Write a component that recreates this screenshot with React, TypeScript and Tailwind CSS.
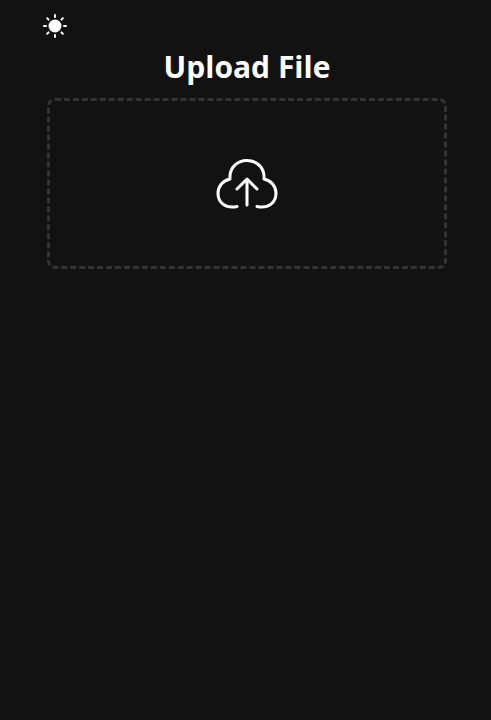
export default function App() {
  return (
    <main className="flex min-h-screen flex-col bg-[#121212] pl-[47px] pr-[44px] font-['Open_Sans','Noto_Sans',sans-serif] text-white">
      <header className="-ml-1 flex h-[50px] items-start pt-[14px]">
        <button aria-label="Toggle theme" className="size-6">
          <svg viewBox="0 0 24 24" className="size-6" fill="currentColor" stroke="currentColor" strokeWidth="2" strokeLinecap="round">
            <circle cx="12" cy="12" r="6.5" stroke="none" />
            <path d="M12 1v2M12 21v2M1 12h2M21 12h2M4.2 4.2l1.4 1.4M18.4 18.4l1.4 1.4M4.2 19.8l1.4-1.4M18.4 5.6l1.4-1.4" />
          </svg>
        </button>
      </header>
      <h1 className="h-12 text-center text-[30px] font-bold leading-[34px]">Upload File</h1>
      <label className="flex h-[171px] cursor-pointer items-center justify-center rounded-lg border-3 border-dashed border-[#333]">
        <svg viewBox="0 0 64 64" className="size-16" fill="none" stroke="currentColor" strokeWidth="3" strokeLinecap="round" strokeLinejoin="round">
          <path d="M22 54.5C10 57 3 50 3 41.500C3 34 8 28.500 15 27C14 16 22 8.500 32 8.500S50 16 49 27C56 28.500 61 34 61 41.500C61 50 54 57 42 54.500M32 53V29M22 37L32 27L42 37" />
        </svg>
      </label>
    </main>
  );
}
